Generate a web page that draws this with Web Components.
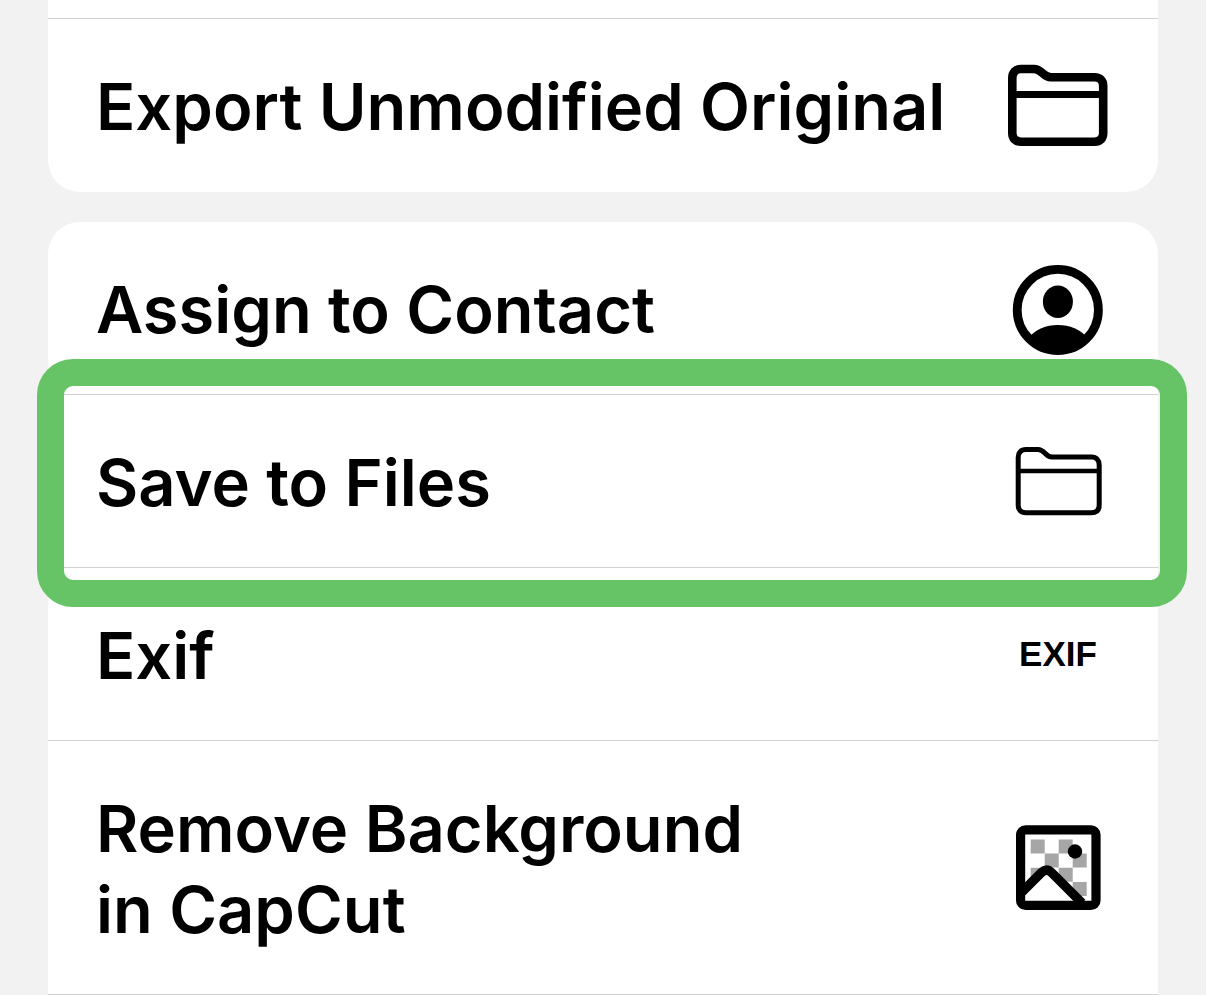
<!DOCTYPE html>
<html lang="en">
<head>
<meta charset="utf-8">
<title>Share sheet</title>
<style>
html, body { margin: 0; background: #f2f2f2; }
body { font-family: Inter, "Liberation Sans", sans-serif; color: #000; }
</style>
</head>
<body>
<share-sheet>
  <action-group joined>
    <action-row blank></action-row>
    <action-row>Export Unmodified Original<action-icon slot="icon" name="folder-bold"></action-icon></action-row>
  </action-group>
  <action-group continued>
    <action-row>Assign to Contact<action-icon slot="icon" name="contact"></action-icon></action-row>
    <action-row highlighted>Save to Files<action-icon slot="icon" name="folder"></action-icon></action-row>
    <action-row>Exif<action-icon slot="icon" name="exif"></action-icon></action-row>
    <action-row>Remove Background<br>in CapCut<action-icon slot="icon" name="cutout"></action-icon></action-row>
    <action-row blank></action-row>
  </action-group>
</share-sheet>
<script>
const define = (name, html, ready) => {
  customElements.define(name, class extends HTMLElement {
    constructor() {
      super();
      this.attachShadow({ mode: "open" }).innerHTML = html;
    }
    connectedCallback() { if (ready) ready(this); }
  });
};

define("share-sheet", `
<style>
:host { display: flex; flex-direction: column; gap: 30px; padding: 0 48px; }
</style>
<slot></slot>`);

define("action-group", `
<style>
:host { display: block; background: #fff; border-radius: 32px; padding-bottom: 1px; }
:host([joined]) { border-top-left-radius: 0; border-top-right-radius: 0; }
:host([continued]) { border-bottom-left-radius: 0; border-bottom-right-radius: 0; padding-bottom: 0; }
</style>
<slot></slot>`);

define("action-row", `
<style>
:host { display: block; position: relative; border-top: 1px solid #d1d1d1; }
:host(:first-child) { border-top: 0; }
:host([blank]) { height: 18px; }
:host([blank]:last-child) { height: 0; }
:host([blank]) button { display: none; }
:host([highlighted])::after {
  content: ""; position: absolute; z-index: 1; box-sizing: border-box;
  top: -36px; right: -29px; bottom: -40px; left: -11px;
  border: 27px solid #66c466; border-radius: 36px; pointer-events: none;
}
button {
  display: flex; align-items: center; justify-content: space-between; box-sizing: border-box;
  width: 100%; margin: 0; padding: 44px 50px 44px 48px; border: 0; background: none;
  font: 600 65px/81px Inter, "Liberation Sans", sans-serif; color: inherit; text-align: left;
}
.label { white-space: nowrap; padding-top: 3px; }
</style>
<button type="button"><span class="label"><slot></slot></span><slot name="icon"></slot></button>`);

const folder = (d, bar, width, barWidth) =>
  `<svg viewBox="0 0 100 100" fill="none" stroke="#000"><path stroke-width="${width}" d="${d}"/><path stroke-width="${barWidth}" d="${bar}"/></svg>`;

const icons = {
  "folder-bold": folder(
    "M4.3 23C4.3 17.500 7.500 14 13 14H26C34 14 35 22.300 43 22.300H86.500C92 22.300 95.200 25.500 95.200 31V78C95.200 83.500 92 86.700 86.500 86.700H13C7.500 86.700 4.300 83.500 4.300 78Z",
    "M4 39.500H95", 8.6, 7),
  "folder": folder(
    "M10.200 26.500C10.200 21.500 13 18.500 18 18.500H30C37 18.500 37 26 44 26H83.500C88.500 26 91.200 29 91.200 34V74C91.200 79 88.500 81.800 83.500 81.800H18C13 81.800 10.200 79 10.200 74Z",
    "M10 40H91", 5, 4.7),
  "contact": `<svg viewBox="0 0 100 100"><circle cx="49.800" cy="52" r="40.600" fill="none" stroke="#000" stroke-width="8.800"/><ellipse cx="49.900" cy="43.700" rx="15" ry="16.300"/><path d="M20 80Q32 67 49.800 67Q68 67 80 80Q67 95 50 95Q32 95 20 80Z"/></svg>`,
  "exif": `<span>EXIF</span>`,
  "cutout": `<svg viewBox="0 0 100 100"><path fill="#a6a6a6" d="M22.700 21.500h14v14h-14zM50.700 21.500h14v14h-14zM36.700 35.500h14v14h-14zM64.700 35.500h14v14h-14zM22.700 49.800h14v14h-14zM50.700 49.800h14v14h-14zM64.700 64h14v14h-14z"/><path fill="#fff" d="M15 73L38.700 51L72 85H15Z"/><path fill="none" stroke="#000" stroke-width="9.400" d="M14 74L33.500 54.500Q38.700 49.800 44 55L74 85"/><circle cx="67" cy="33.500" r="7.200"/><rect x="12.600" y="11.800" width="75.400" height="75.600" rx="5" fill="none" stroke="#000" stroke-width="9.200"/></svg>`
};

define("action-icon", `
<style>
:host { display: flex; flex: none; align-items: center; justify-content: center; width: 100px; }
svg { display: block; width: 100px; height: 100px; margin: -10px 0; }
span { display: block; font: 700 35px/42px "Liberation Sans", Arial, sans-serif; }
</style>
<div></div>`, el => {
  el.shadowRoot.querySelector("div").innerHTML = icons[el.getAttribute("name")];
});
</script>
</body>
</html>
